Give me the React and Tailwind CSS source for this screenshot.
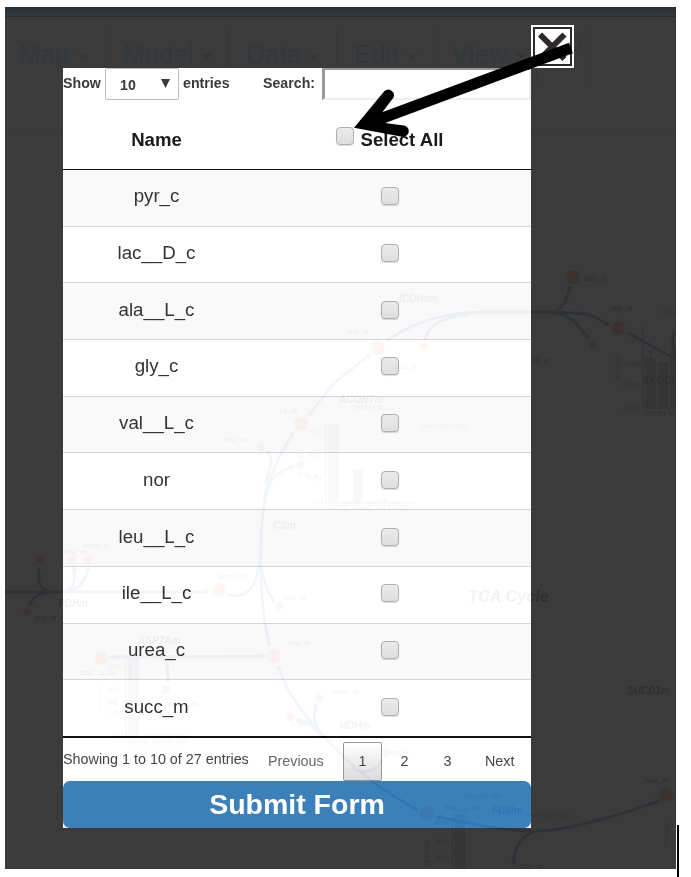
import React from "react";

const ROWS = [
  "pyr_c", "lac__D_c", "ala__L_c", "gly_c", "val__L_c",
  "nor", "leu__L_c", "ile__L_c", "urea_c", "succ_m",
];

const MENU = [
  { label: "Map", width: "w-[101px] pl-[14px]" },
  { label: "Model", width: "w-[123px] pl-[17px]" },
  { label: "Data", width: "w-[108px] pl-[17px]" },
  { label: "Edit", width: "w-[98px] pl-[17px]" },
  { label: "View", width: "w-[102px] pl-[17px]" },
];

function Checkbox() {
  return (
    <span className="block size-[18px] shrink-0 rounded-[4px] border-[1.500px] border-[#b0b0b0] bg-linear-to-b from-[#ebebeb] to-[#dedede] shadow-[0_1px_1px_rgba(0,0,0,0.15)]" />
  );
}

function MenuBar() {
  return (
    <div>
      <div className="h-[10px] border-b border-[#2b2e30] bg-linear-to-b from-[#282d31] to-[#343a3e]" />
      <div className="flex h-[118px] border-b border-[#383838] pt-[9px]">
        {MENU.map((m) => (
          <div
            key={m.label}
            className={`flex h-[57px] items-center gap-[8px] border-r border-[#373737] text-[26px] text-[#31393f] ${m.width}`}
          >
            {m.label}
            <svg width="10" height="5" className="mt-[4px]" viewBox="0 0 10 5">
              <path d="M0 0h10L5 5z" fill="#2f373d" />
            </svg>
          </div>
        ))}
        <div className="flex h-[57px] w-[54px] border-r border-[#383838] pt-[4px] pl-[34px] text-[20px] text-[#2f3a43]">?</div>
      </div>
    </div>
  );
}

/* Metabolites: x, y, radius */
const NODES = [
  [573, 277, 7], [618, 328, 7], [593, 345, 4], [378, 348, 7], [424, 347, 4],
  [301, 424, 7], [261, 447, 4], [300, 465, 4], [219, 590, 7], [40, 560, 4],
  [72, 560, 4], [88, 560, 4], [27, 612, 4], [279, 606, 4], [101, 658, 7],
  [274, 656, 7], [319, 698, 4], [290, 717, 4], [134, 690, 4], [166, 690, 4],
  [427, 813, 7], [666, 795, 7], [385, 753, 4],
];

const FLUXES = [
  "M386 341C420 318 450 312 490 312H552C610 314 590 318 608 324",
  "M552 312C562 311 566 300 570 288",
  "M552 312C570 314 577 324 588 338",
  "M425 340C428 325 440 318 470 314",
  "M628 333L676 359",
  "M309 415L333 384L369 355",
  "M293 433C274 462 261 495 261 545C260 590 264 625 270 646",
  "M268 452C275 462 268 470 266 484",
  "M292 467C274 472 266 486 264 500",
  "M5 592H207",
  "M39 567C37 588 42 592 58 592C40 592 33 596 29 606",
  "M60 592C76 592 75 580 74 568M60 592C80 592 84 582 88 569",
  "M228 595C252 600 258 580 260 555C262 580 268 592 274 602",
  "M111 657L264 656",
  "M130 682C130 664 130 660 138 658M160 658C168 660 168 670 168 682",
  "M278 667C290 700 310 722 330 743C360 775 385 792 416 809",
  "M298 720C310 722 316 728 322 737M316 705C312 718 315 724 322 737",
  "M352 768C368 776 379 768 382 759",
  "M438 817C475 824 500 831 535 831C570 831 630 812 658 801",
  "M535 831C519 838 514 848 514 862",
  "M674 331C671 345 674 353 681 360",
];

const HEADS = [
  [570, 287, -70], [608, 324, 18], [588, 338, 52], [369, 355, -40], [309, 415, 128],
  [293, 433, -60], [268, 452, -110], [292, 467, -15], [207, 591, 0], [111, 657, 180],
  [264, 656, 0], [278, 667, -110], [416, 809, 30], [438, 817, -170], [658, 801, -22],
  [514, 863, 90], [74, 568, -95], [88, 569, -70], [298, 720, -155], [316, 705, -70],
];

/* x, y, text, font size, kind: m = metabolite, r = reaction, t = chart text */
const LABELS = [
  [584, 281, "co2_m", 7, "m"], [610, 311, "akg_m", 7, "m"], [531, 363, "dh_m", 7, "m"],
  [661, 315, "AkgM", 8, "t"], [642, 384, "AKGDm", 10, "r"], [399, 302, "ICDHxm", 10, "r"],
  [348, 334, "icit_m", 7, "m"], [394, 369, "nad_m", 7, "m"], [339, 403, "ACONTm", 10, "r"],
  [351, 410, "Cit459 MID", 7, "t"], [279, 413, "cit_m", 7, "m"], [421, 428, "Group One 100%", 6, "t"],
  [305, 478, "h_m", 7, "m"], [224, 442, "coa_m", 7, "m"], [273, 529, "CSm", 10, "r"],
  [83, 548, "nadh_m", 7, "m"], [64, 554, "co2_m", 7, "m"], [58, 607, "PDHm", 10, "r"],
  [34, 620, "coa_m", 7, "m"], [218, 579, "accoa_m", 7, "m"], [283, 600, "h2o_m", 7, "m"],
  [468, 602, "TCA Cycle", 16.3, "r"], [138, 644, "ASPTAm", 10, "r"], [288, 645, "oaa_m", 7, "m"],
  [81, 675, "asp__L_m", 7, "m"], [106, 704, "akg_m", 7, "m"], [165, 706, "glu__L_m", 7, "m"],
  [332, 694, "nadh_m", 7, "m"], [291, 727, "h_m", 7, "m"], [339, 729, "MDHm", 10, "r"],
  [388, 755, "nad_m", 7, "m"], [627, 694, "SUCD1m", 10, "r"], [465, 799, "Mal419 MID", 7, "t"],
  [445, 810, "mal__L_m", 7, "m"], [492, 814, "FUMm", 10, "r"], [525, 817, "Group One 100%", 6, "t"],
  [645, 783, "fum_m", 7, "m"], [520, 869, "h2o_m", 7, "m"],
  [309, 435, "60%", 7, "t"], [309, 458, "40%", 7, "t"], [309, 481, "20%", 7, "t"], [313, 504, "0%", 7, "t"],
  [329, 510, "M0 M1 M2 M3 M4 M5 M6", 7, "t"],
  [108, 669, "60%", 7, "t"], [108, 692, "40%", 7, "t"], [108, 715, "20%", 7, "t"], [113, 737, "0%", 7, "t"],
  [129, 745, "M0 M1 M2 M3 M4", 7, "t"],
  [625, 343, "0.5%", 7, "t"], [625, 366, "0.0%", 7, "t"], [622, 387, "-0.5%", 7, "t"], [622, 410, "-1.0%", 7, "t"],
  [645, 416, "M0 M1 M2", 7, "t"],
  [435, 826, "80%", 7, "t"], [435, 844, "60%", 7, "t"], [435, 860, "40%", 7, "t"],
];

const BARS = [
  [328, 424, 11, 79], [341, 501, 10, 3], [353, 469, 10, 35], [365, 501, 10, 2], [377, 499, 10, 4],
  [389, 501, 10, 2], [401, 502, 10, 1], [128, 657, 11, 79], [645, 358, 11, 50], [658, 363, 10, 45],
  [670, 350, 10, 58], [454, 814, 11, 60],
];

const AXES = "M326 424V503H415M126 655V736H190M640 328H643V408H680M452 812V872M651 352V365M648 352h6M648 365h6M658 363h10";

function PathwayMap() {
  return (
    <svg
      className="pointer-events-none absolute inset-0 mix-blend-difference"
      width="671"
      height="862"
      viewBox="5 7 671 862"
      fontFamily="Liberation Sans, Arial, sans-serif"
    >
      <g fill="rgb(6,6,6)">
        {BARS.map(([x, y, w, h]) => <rect key={`${x}-${y}`} x={x} y={y} width={w} height={h} />)}
      </g>
      <path d={AXES} fill="none" stroke="rgb(10,10,10)" />
      <g fill="none" stroke="rgb(13,10,6)" strokeWidth="2.8">
        {FLUXES.map((d) => <path key={d} d={d} />)}
      </g>
      <g fill="rgb(13,10,6)">
        {HEADS.map(([x, y, a]) => (
          <path key={`${x}-${y}`} d="M-3-3L3 0L-3 3z" transform={`translate(${x} ${y}) rotate(${a})`} />
        ))}
      </g>
      <g fill="rgb(0,9,12)">
        {NODES.map(([x, y, r]) => <circle key={`${x}-${y}`} cx={x} cy={y} r={r} />)}
      </g>
      {LABELS.map(([x, y, text, size, kind]) => (
        <text
          key={`${x}-${y}`}
          x={x}
          y={y}
          fontSize={size}
          fill={kind === "r" ? "rgb(13,13,9)" : "rgb(12,12,12)"}
          fontWeight={kind === "t" ? 400 : 700}
          fontStyle={kind === "t" ? "normal" : "italic"}
        >
          {text}
        </text>
      ))}
      {[[303, 478], [102, 711], [620, 382], [429, 866], [669, 847]].map(([x, y]) => (
        <text key={`${x}-${y}`} transform={`translate(${x} ${y}) rotate(-90)`} fontSize="7" fill="rgb(12,12,12)">
          % Label
        </text>
      ))}
    </svg>
  );
}

function Controls() {
  return (
    <div className="flex h-[32px] text-[14.2px] font-bold text-[#3a3a3a]">
      <div className="w-[42px] pt-[5px]">Show</div>
      <div className="flex w-[74px] items-center justify-between rounded-[2px] border border-[#bdbdbd] pt-[4px] pr-[8px] pl-[14px]">
        <span>10</span>
        <svg width="9" height="9" viewBox="0 0 9 9" className="-mt-[5px]">
          <path d="M0 0h9L4.500 9z" fill="#3a3a3a" />
        </svg>
      </div>
      <div className="w-[84px] pt-[5px] pl-[4px]">entries</div>
      <div className="w-[59px] pt-[5px]">Search:</div>
      <div className="flex-1 border-t-[2px] border-r-[2px] border-b-[2px] border-l-[3px] border-t-[#9a9a9a] border-r-[#eeeeee] border-b-[#eeeeee] border-l-[#9a9a9a]" />
    </div>
  );
}

function Pagination() {
  return (
    <div className="flex h-[43px] text-[14.3px] text-[#444]">
      <div className="w-[205px] pt-[11px] text-[14.35px] whitespace-nowrap">Showing 1 to 10 of 27 entries</div>
      <div className="w-[75px] pt-[13px] text-[#666]">Previous</div>
      <div className="mt-[4px] flex h-[39px] w-[39px] items-center justify-center rounded-[2px] border border-[#979797] bg-linear-to-b from-white to-[#dcdcdc]">
        1
      </div>
      <div className="w-[45px] pt-[13px] text-center">2</div>
      <div className="w-[41px] pt-[13px] text-center">3</div>
      <div className="pt-[13px] pl-[17px]">Next</div>
    </div>
  );
}

function Dialog() {
  return (
    <div className="absolute top-[61px] left-[58px] flex h-[760px] w-[468px] flex-col bg-white">
      <Controls />
      <div className="flex h-[70px] items-center border-b-[1.500px] border-[#111] pt-[11px] text-[18.6px] font-bold text-[#1a1a1a]">
        <div className="w-[187px] text-center">Name</div>
        <div className="flex w-[281px] justify-center gap-[6px] pr-[1px]">
          <span className="mt-[1px]"><Checkbox /></span>
          <span>Select All</span>
        </div>
      </div>
      <div className="flex h-[569px] flex-col border-b-[2px] border-[#111]">
        {ROWS.map((name, i) => (
          <div
            key={name}
            className={`flex flex-1 items-center text-[18.7px] text-[#333] ${i ? "border-t border-[#d5d5d5]" : ""} ${i % 2 ? "bg-white" : "bg-[#f9f9f9]"}`}
          >
            <div className="w-[187px] pb-[3px] text-center">{name}</div>
            <div className="flex w-[281px] justify-center pb-[3px] pr-[1px]"><Checkbox /></div>
          </div>
        ))}
      </div>
      <Pagination />
      <button className="h-[47px] shrink-0 rounded-[7px] bg-[#3c80ba] text-[28.5px] leading-[47px] font-bold text-white">
        Submit Form
      </button>
    </div>
  );
}

function CloseButton() {
  return (
    <button className="absolute top-[18px] left-[526px] size-[43px] bg-white p-[2px]">
      <span className="flex size-[39px] items-center justify-center border-[2px] border-[#2e292b]">
        <svg width="33" height="33" viewBox="0 0 33 33">
          <path d="M4 4.500L28.500 29M28.500 4.500L4 29" stroke="#2e292b" strokeWidth="6" />
        </svg>
      </span>
    </button>
  );
}

function PointerArrow() {
  return (
    <svg className="absolute inset-0" width="671" height="862" viewBox="5 7 671 862">
      <path d="M571 48L376 120.500" stroke="#000" strokeWidth="11" />
      <path
        d="M354 127.700L384.500 91A5.700 5.700 0 0 1 393.500 97.500L381 114L385 123L404 125.500A5.700 5.700 0 0 1 402 136.800Z"
        fill="#000"
      />
    </svg>
  );
}

export default function App() {
  return (
    <div className="flex h-[877px] w-[691px] overflow-hidden bg-white pt-[7px] pl-[5px] font-['Liberation_Sans',Arial,sans-serif]">
      <div className="relative isolate h-[862px] w-[671px] overflow-hidden bg-[#3b3b3b]">
        <MenuBar />
        <Dialog />
        <PathwayMap />
        <CloseButton />
        <PointerArrow />
      </div>
      <div className="mt-[818px] ml-[1px] h-[52px] w-[2px] bg-black" />
    </div>
  );
}
